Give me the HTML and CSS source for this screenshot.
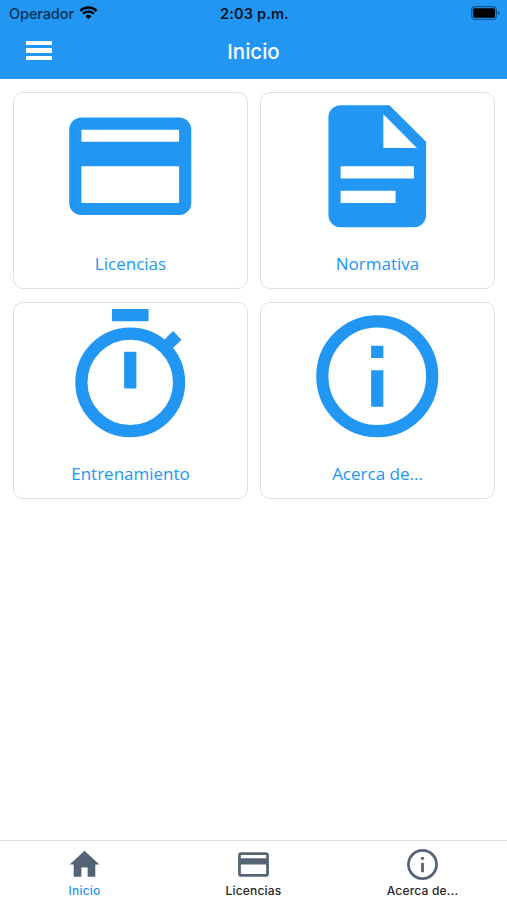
FILE: index.html
```html
<!DOCTYPE html>
<html lang="es">
<head>
<meta charset="utf-8">
<title>Inicio</title>
<link rel="stylesheet" href="styles.css">
</head>
<body>
<header class="header">
  <div class="status">
    <div class="carrier"><span class="carrier-name">Operador</span>
      <svg class="wifi" viewBox="0 0 20 15"><path d="M10 14.2 6.9 11a4.4 4.4 0 0 1 6.2 0z"/><path d="M4.2 8.2a8.2 8.2 0 0 1 11.6 0M1.3 5.2a12.3 12.3 0 0 1 17.4 0" fill="none" stroke="currentColor" stroke-width="2.7"/></svg>
    </div>
    <time class="clock">2:03 p.m.</time>
    <svg class="battery" viewBox="0 0 30 14"><rect x="1.7" y=".7" width="24.6" height="12.6" rx="3.4" fill="none" stroke="#0d5796" stroke-width="1.2"/><rect x="3.2" y="2.3" width="21.700" height="9.400" rx="1.300"/><path d="M27.6 4.8q2 .8 2 2.2t-2 2.2z" fill="#0d5796"/></svg>
  </div>
  <div class="toolbar">
    <button class="menu" aria-label="Menú"><span></span><span></span><span></span></button>
    <h1 class="title">Inicio</h1>
  </div>
</header>
<main class="grid">
  <a class="card">
    <svg class="card-icon" viewBox="0 0 24 24"><path fill-rule="evenodd" d="M4 4h16a2 2 0 0 1 2 2v12a2 2 0 0 1-2 2H4a2 2 0 0 1-2-2V6a2 2 0 0 1 2-2zm0 2v2h16V6zm0 6v6h16v-6z"/></svg>
    <span class="card-label">Licencias</span>
  </a>
  <a class="card">
    <svg class="card-icon" viewBox="0 0 24 24"><path fill-rule="evenodd" d="M6 2h8l6 6v12a2 2 0 0 1-2 2H6a2 2 0 0 1-2-2V4a2 2 0 0 1 2-2zm7 1.5V9h5.5zM6 12v2h12v-2zm0 4v2h9v-2z"/></svg>
    <span class="card-label">Normativa</span>
  </a>
  <a class="card">
    <svg class="card-icon" viewBox="0 0 24 24"><path d="M9 1h6v2H9zm2 7h2v6h-2z"/><path d="m17.2 6.4 1.8-1.8 1.4 1.4-1.8 1.8z"/><circle cx="12" cy="13" r="8" fill="none" stroke="currentColor" stroke-width="2"/></svg>
    <span class="card-label">Entrenamiento</span>
  </a>
  <a class="card">
    <svg class="card-icon" viewBox="0 0 24 24"><path d="M11 7h2v2h-2zm0 4h2v6h-2z"/><circle cx="12" cy="12" r="9" fill="none" stroke="currentColor" stroke-width="2"/></svg>
    <span class="card-label">Acerca de...</span>
  </a>
</main>
<nav class="tabs">
  <a class="tab tab-active">
    <svg class="tab-icon" viewBox="0 0 24 24"><path d="M10 20v-6h4v6h5v-8h2.600L12 3 2.400 12H5v8z"/></svg>
    <span class="tab-label">Inicio</span>
  </a>
  <a class="tab">
    <svg class="tab-icon" viewBox="0 0 24 24"><path fill-rule="evenodd" d="M4 4h16a2 2 0 0 1 2 2v12a2 2 0 0 1-2 2H4a2 2 0 0 1-2-2V6a2 2 0 0 1 2-2zm-.2 1.800v2.200h16.400V5.800zm0 6.200v6.200h16.400v-6.200z"/></svg>
    <span class="tab-label">Licencias</span>
  </a>
  <a class="tab">
    <svg class="tab-icon" viewBox="0 0 24 24"><path d="M11.100 11h1.800v6h-1.800z"/><circle cx="12" cy="8" r="1.100"/><circle cx="12" cy="12" r="9.100" fill="none" stroke="currentColor" stroke-width="1.800"/></svg>
    <span class="tab-label">Acerca de...</span>
  </a>
</nav>
</body>
</html>
```
FILE: styles.css
```css
* { box-sizing: border-box; }

body {
  margin: 0;
  height: 900px;
  display: flex;
  flex-direction: column;
  background: #fff;
  font-family: Inter, "Liberation Sans", sans-serif;
  overflow: hidden;
}

svg { display: block; fill: currentColor; }

.header {
  flex: none;
  height: 79px;
  background: #2196f3;
}

.status {
  display: grid;
  grid-template-columns: 1fr auto 1fr;
  align-items: center;
  height: 27px;
  padding: 0 7px 0 9px;
  color: #03121e;
}

.carrier { display: flex; align-items: center; gap: 5px; }
.carrier-name { font-size: 14.5px; line-height: 20px; font-weight: 500; letter-spacing: -.1px; color: #06304f; }
.wifi { width: 19px; height: 14px; margin-top: -1px; color: #000; }
.clock { font-size: 14.5px; line-height: 20px; font-weight: 600; letter-spacing: .15px; }
.battery { justify-self: end; width: 30px; height: 14px; margin-top: -1px; color: #000; }

.toolbar {
  display: grid;
  grid-template-columns: 1fr auto 1fr;
  align-items: center;
  height: 50px;
  padding: 0 26px;
  color: #fff;
}

.menu {
  display: flex;
  flex-direction: column;
  gap: 3px;
  width: 26px;
  margin-top: -3px;
  padding: 0;
  border: 0;
  background: none;
}
.menu span { height: 4.5px; background: #fff; }

.title { margin: 0; font-size: 20.5px; line-height: 26px; font-weight: 500; }

.grid {
  flex: 1;
  display: grid;
  grid-template-columns: 235px 235px;
  grid-auto-rows: 197px;
  align-content: start;
  gap: 13px 12px;
  padding: 12.5px 13px;
}

.card {
  display: flex;
  flex-direction: column;
  align-items: center;
  border: 1px solid #dfdfdf;
  border-radius: 10px;
  color: #2196f3;
}
.card-icon { width: 146.5px; height: 146.5px; }
.card-label {
  margin-top: 12px;
  font-family: "Open Sans", "Noto Sans", sans-serif;
  font-size: 17px;
  line-height: 26px;
}

.tabs {
  flex: none;
  display: grid;
  grid-template-columns: repeat(3, 1fr);
  height: 60px;
  border-top: 1px solid #dcdcdc;
}
.tab {
  display: flex;
  flex-direction: column;
  align-items: center;
  padding-top: 5px;
  color: #546474;
}
.tab-icon { width: 37px; height: 37px; }
.tab-label { font-size: 12px; line-height: 16px; font-weight: 500; letter-spacing: .2px; color: #252525; }
.tab-active .tab-label { color: #2196f3; }
```
